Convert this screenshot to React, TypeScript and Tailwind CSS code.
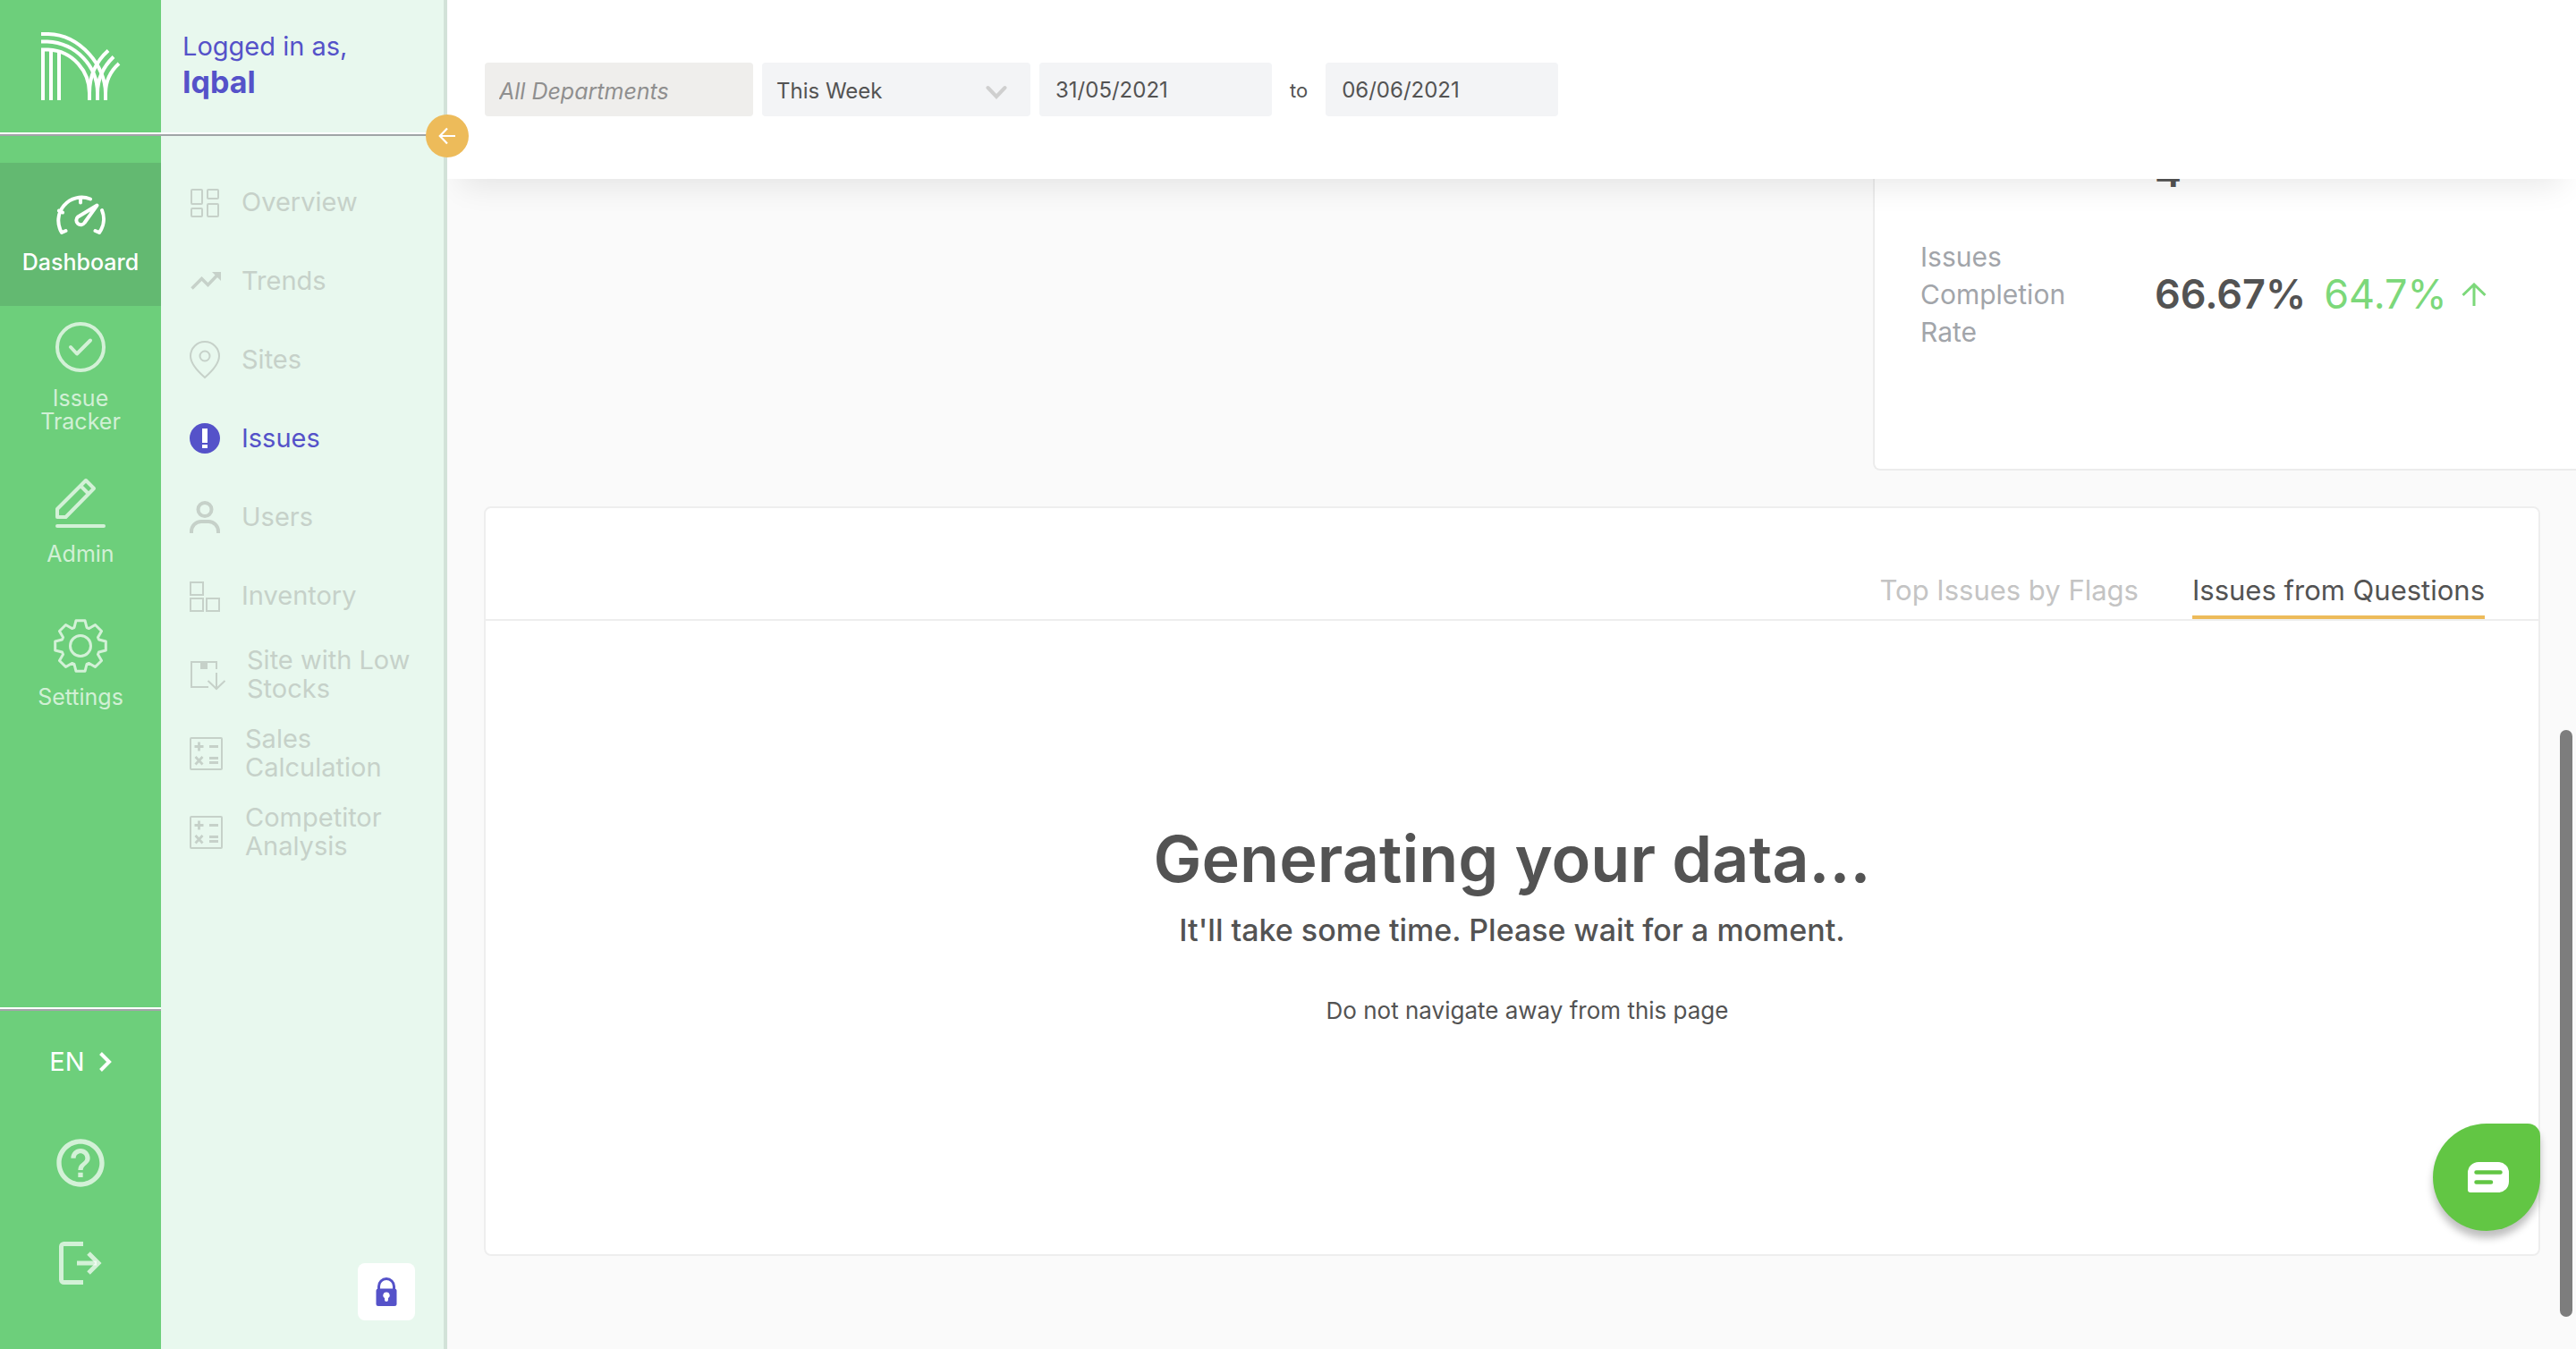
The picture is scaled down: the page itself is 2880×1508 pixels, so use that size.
import React from 'react';
import { MdHelpOutline } from 'react-icons/md';

const MUTED = 'text-[#c6d1c9]';

function Logo() {
  return (
    <svg viewBox="44 34 92 80" className="h-[80px] w-[92px]" fill="none" stroke="#fff" strokeWidth="4" aria-hidden="true">
      <path d="M48 112V55.500M57 112V57M66 112V58" />
      <path d="M46 55.500H54C82 57 100 80 100 104V112" />
      <path d="M46 46.500H53C85 48 109 74 109 104V112" />
      <path d="M46 38H54C90 39 118 74 118 104V112" />
      <path d="M100 112V104C100 86 107 69 121 56.500" />
      <path d="M109 112V104C109 89 115 75 127 63.500" />
      <path d="M118 112V104C118 91 123 80 133 71" />
    </svg>
  );
}

const railSvg = {
  viewBox: '0 0 60 60',
  className: 'size-[60px] overflow-visible',
  fill: 'none',
  stroke: 'currentColor',
  strokeWidth: 4,
  strokeLinecap: 'round' as const,
  strokeLinejoin: 'round' as const,
  'aria-hidden': true,
};

function gearPath() {
  const tooth = [[-7, -20.5], [-5, -28.3], [5, -28.3], [7, -20.5]];
  const pts: string[] = [];
  for (let k = 0; k < 8; k++) {
    const a = (k * Math.PI) / 4;
    for (const [x, y] of tooth) {
      pts.push(`${(30 + x * Math.cos(a) - y * Math.sin(a)).toFixed(2)} ${(30 + x * Math.sin(a) + y * Math.cos(a)).toFixed(2)}`);
    }
  }
  return `M${pts.join('L')}Z`;
}

const GaugeIcon = () => (
  <svg {...railSvg}>
    <path d="M13.500 52L9 54A26 26 0 0 1 41 16.500M54 29A26 26 0 0 1 51 54L46.500 52M30 15V20.500M6 29.500L10 31.500" />
    <path d="M48.500 23.500L27 36.500A5 5 0 1 0 34.500 43Z" />
  </svg>
);
const CheckIcon = () => (
  <svg {...railSvg}>
    <circle cx="30" cy="30" r="26" />
    <path d="M19 30L26 37.500L41 22.500" />
  </svg>
);
const PencilIcon = () => (
  <svg {...railSvg}>
    <path d="M36 5L45 14L13.500 46H4V37ZM30.500 11.500L38 19M4 56H56" />
  </svg>
);
const GearIcon = () => (
  <svg {...railSvg} strokeWidth={3}>
    <path d={gearPath()} />
    <circle cx="30" cy="30" r="11.500" />
  </svg>
);

const RAIL = [
  { label: 'Dashboard', Icon: GaugeIcon, cls: 'bg-[#63b971] pt-6 pb-9 font-medium text-white' },
  { label: 'Issue Tracker', Icon: CheckIcon, cls: 'pt-4 pb-6 text-white/70' },
  { label: 'Admin', Icon: PencilIcon, cls: 'pt-6 pb-8 text-white/70' },
  { label: 'Settings', Icon: GearIcon, cls: 'pt-7 pb-6 text-white/70' },
];

const menuSvg = {
  viewBox: '0 0 34 34',
  className: 'size-[34px] shrink-0 overflow-visible',
  fill: 'none',
  stroke: 'currentColor',
  strokeWidth: 2,
  'aria-hidden': true,
};

const OverviewIcon = () => (
  <svg {...menuSvg}>
    <rect x="2" y="3" width="12" height="16" rx="1" />
    <rect x="20" y="3" width="12" height="10" rx="1" />
    <rect x="2" y="24" width="12" height="9" rx="1" />
    <rect x="20" y="19" width="12" height="14" rx="1" />
  </svg>
);
const TrendsIcon = () => (
  <svg {...menuSvg}>
    <path d="M2.500 25.500L13.500 14.500L20.500 21.500L31 10.500" strokeWidth="3.500" />
    <path d="M25 7H35V17Z" fill="currentColor" stroke="none" />
  </svg>
);
const PinIcon = () => (
  <svg {...menuSvg}>
    <path d="M17 37C9 30 1 22 1 13A16 16 0 0 1 33 13C33 22 25 30 17 37Z" />
    <circle cx="17" cy="13" r="5.500" />
  </svg>
);
const AlertIcon = () => (
  <svg {...menuSvg} stroke="none">
    <circle cx="17" cy="17" r="17" fill="currentColor" />
    <path d="M14 6H20V22H14ZM14 24H20V28H14Z" fill="#fff" />
  </svg>
);
const UserIcon = () => (
  <svg {...menuSvg} strokeWidth={4}>
    <circle cx="17" cy="8.500" r="7.500" />
    <path d="M2 35V33.500A11 11 0 0 1 13 22H21A11 11 0 0 1 32 33.500V35" />
  </svg>
);
const BoxesIcon = () => (
  <svg {...menuSvg}>
    <path d="M1 2H15V16H1ZM1 20H15V34H1ZM19 20H33V34H19Z" />
  </svg>
);
const LowStockIcon = () => (
  <svg {...menuSvg} viewBox="0 0 40 34" className="h-[34px] w-[40px] shrink-0 overflow-visible">
    <path d="M30 11V3H2V31H21M30 15V32M20.500 24L30 33L39.500 24" />
    <path d="M12 3H20V11H12Z" fill="currentColor" stroke="none" />
  </svg>
);
const CalcIcon = () => (
  <svg {...menuSvg} viewBox="0 0 38 38" className="size-[38px] shrink-0 overflow-visible">
    <rect x="1" y="2" width="35" height="35" rx="1" />
    <path d="M5.500 11.500H15.500M10.500 6.500V16.500M22 11.500H32M22 24.500H32M22 29.500H32M6.500 23L14.500 31.500M14.500 23L6.500 31.500" strokeWidth="2.800" />
  </svg>
);

const MENU = [
  { label: 'Overview', Icon: OverviewIcon },
  { label: 'Trends', Icon: TrendsIcon },
  { label: 'Sites', Icon: PinIcon },
  { label: 'Issues', Icon: AlertIcon, active: true },
  { label: 'Users', Icon: UserIcon },
  { label: 'Inventory', Icon: BoxesIcon },
  { label: 'Site with Low Stocks', Icon: LowStockIcon },
  { label: 'Sales Calculation', Icon: CalcIcon },
  { label: 'Competitor Analysis', Icon: CalcIcon },
];

function Rail() {
  return (
    <nav aria-label="Main" className="flex w-[180px] shrink-0 flex-col bg-[#6dcf7b]">
      <a href="#home" aria-label="Home" className="flex h-[148px] shrink-0 justify-center pt-[34px]">
        <Logo />
      </a>
      <div className="h-1 shrink-0 border-t-2 border-b-2 border-t-white border-b-[#a3a3a9]" />
      <div className="flex flex-col pt-[30px]">
        {RAIL.map(({ label, Icon, cls }) => (
          <a key={label} href="#section" className={`flex flex-col items-center gap-[14px] px-4 text-center text-[25px] leading-[26px] ${cls}`}>
            <Icon />
            {label}
          </a>
        ))}
      </div>
      <div className="mt-auto flex flex-col pb-10">
        <div className="h-1 border-t-2 border-b-2 border-t-white border-b-[#a3a3a9]" />
        <button className="flex h-[114px] items-center justify-center gap-4 text-[29px] text-white">
          EN
          <svg viewBox="0 0 14 22" className="h-[22px] w-[14px]" fill="none" stroke="currentColor" strokeWidth="4" aria-hidden="true">
            <path d="M1.500 1.500L11 11L1.500 20.500" />
          </svg>
        </button>
        <button aria-label="Help" className="flex h-[112px] items-center justify-center text-white/70">
          <MdHelpOutline className="size-[64px]" />
        </button>
        <button aria-label="Log out" className="flex h-[112px] items-center justify-center text-white/70">
          <svg viewBox="0 0 48 48" className="size-[48px]" fill="none" stroke="currentColor" strokeWidth="5" aria-hidden="true">
            <path d="M27 2.500H5.500A3 3 0 0 0 2.500 5.500V42.500A3 3 0 0 0 5.500 45.500H27M20 24H42" />
            <path d="M33 13L44 24L33 35" />
          </svg>
        </button>
      </div>
    </nav>
  );
}

function SidePanel() {
  return (
    <aside className="relative z-20 flex w-80 shrink-0 flex-col border-r-4 border-[#d2e2d8] bg-[#e8f8ee]">
      <div className="h-[148px] shrink-0 pt-8 pl-6 text-[#5552c9]">
        <p className="text-[29px] leading-10">Logged in as,</p>
        <p className="text-[34px] leading-10 font-bold">Iqbal</p>
      </div>
      <div className="h-1 shrink-0 border-t-2 border-b-2 border-t-white border-b-[#a0a5a6]" />
      <button
        aria-label="Collapse menu"
        className="absolute top-[128px] -right-[28px] flex size-12 items-center justify-center rounded-full bg-[#edbb5a]"
      >
        <svg viewBox="0 0 20 20" className="size-5" fill="none" stroke="#fff" strokeWidth="2.200" aria-hidden="true">
          <path d="M19 10H2M10 1.500L1.800 10L10 18.500" />
        </svg>
      </button>
      <nav aria-label="Dashboard" className="pt-[30px]">
        {MENU.map(({ label, Icon, active }) => (
          <a
            key={label}
            href="#view"
            aria-current={active ? 'page' : undefined}
            className={`flex h-[88px] items-center gap-6 pr-4 pl-8 text-[29px] leading-8 ${active ? 'text-[#5552c9]' : MUTED}`}
          >
            <Icon />
            <span>{label}</span>
          </a>
        ))}
      </nav>
      <button aria-label="Lock menu" className="mt-auto mr-8 mb-8 flex size-16 items-center justify-center self-end rounded-lg bg-white">
        <svg viewBox="0 0 24 32" className="h-8 w-6" aria-hidden="true">
          <path d="M3.500 14V10A8.500 8.500 0 0 1 20.500 10V14" fill="none" stroke="#5552c9" strokeWidth="3" />
          <rect x="0.500" y="12.500" width="23" height="19.500" rx="2.500" fill="#5552c9" />
          <path d="M12 16.500A3.500 3.500 0 0 1 14 23V25A2 2 0 0 1 10 25V23A3.500 3.500 0 0 1 12 16.500Z" fill="#fff" />
        </svg>
      </button>
    </aside>
  );
}

function Filters() {
  const field = 'h-[60px] rounded bg-[#f3f4f6] text-[24px] text-[#535353] outline-none';
  return (
    <header className="relative z-10 flex h-[200px] shrink-0 items-start bg-white pt-[70px] pl-[42px] shadow-[0_24px_32px_-16px_rgba(0,0,0,0.09)]">
      <input
        aria-label="Department"
        disabled
        placeholder="All Departments"
        className="h-[60px] w-[300px] rounded bg-[#efeeec] px-4 pt-1 text-[25px] italic outline-none placeholder:text-[#8f8f8f]"
      />
      <div className="relative ml-[10px]">
        <select aria-label="Period" className={`${field} w-[300px] appearance-none px-4 pt-1`}>
          <option>This Week</option>
        </select>
        <svg viewBox="0 0 24 16" className="pointer-events-none absolute top-[25px] right-[26px] h-4 w-6" fill="none" stroke="#cfcfcf" strokeWidth="4" strokeLinecap="round" aria-hidden="true">
          <path d="M2.500 3L12 13L21.500 3" />
        </svg>
      </div>
      <input aria-label="From date" defaultValue="31/05/2021" className={`${field} ml-[10px] w-[260px] px-[18px]`} />
      <span className="px-5 text-[22px] leading-[62px] text-[#535353]">to</span>
      <input aria-label="To date" defaultValue="06/06/2021" className={`${field} w-[260px] px-[18px]`} />
    </header>
  );
}

function IssueStats() {
  return (
    <section aria-label="Issue totals" className="flex w-[786px] max-w-full shrink-0 flex-col gap-10 self-end rounded-bl-lg border-b-2 border-l-2 border-[#ececec] bg-white pb-[132px] pl-[51px]">
      <div className="flex h-[66px] items-center pl-[262px] text-[45px] font-semibold">4</div>
      <div className="flex items-center text-[45px]">
        <p className="w-[262px] pr-16 text-[30px] leading-[42px] text-[#a2a5aa]">Issues Completion Rate</p>
        <span className="font-semibold">66.67%</span>
        <span className="ml-5 text-[#7cd87a]">64.7%</span>
        <svg viewBox="0 0 28 26" className="ml-4 h-[26px] w-7" fill="none" stroke="#7cd87a" strokeWidth="3" aria-hidden="true">
          <path d="M14 26V2M1.500 14L14 2L26.500 14" />
        </svg>
      </div>
    </section>
  );
}

function IssuesCard() {
  return (
    <section className="mr-10 ml-[41px] shrink-0 rounded-lg border-2 border-[#eee] bg-white">
      <div role="tablist" className="flex items-end justify-end gap-[60px] border-b-2 border-[#eee] pt-16 pr-[60px] text-[31px] leading-[46px]">
        <button role="tab" aria-selected="false" className="h-[60px] border-b-4 border-transparent text-[#c4c4c4]">
          Top Issues by Flags
        </button>
        <button role="tab" aria-selected="true" className="h-[60px] border-b-4 border-[#edbb5a]">
          Issues from Questions
        </button>
      </div>
      <div className="flex flex-col items-center pt-[212px] pb-[252px] text-center">
        <h1 className="text-[72px] leading-[108px] font-semibold">Generating your data...</h1>
        <p className="text-[34px] leading-[52px] font-medium">It&apos;ll take some time. Please wait for a moment.</p>
        <p className="mt-11 pl-[34px] text-[26px] leading-[40px]">Do not navigate away from this page</p>
      </div>
    </section>
  );
}

export default function App() {
  return (
    <div className="relative flex h-screen w-full overflow-hidden bg-[#fafafa] font-['Inter',sans-serif] text-[#535353]">
      <Rail />
      <SidePanel />
      <main className="flex min-w-0 flex-1 flex-col">
        <Filters />
        <div className="flex min-h-0 flex-1 flex-col justify-end gap-10 overflow-hidden pb-[104px]">
          <IssueStats />
          <IssuesCard />
        </div>
      </main>
      <button
        aria-label="Open chat"
        className="absolute right-10 bottom-[132px] flex size-[120px] items-center justify-center rounded-[60px] rounded-tr-[14px] bg-[#62c644] shadow-[0_8px_8px_rgba(0,0,0,0.25)]"
      >
        <svg viewBox="0 0 46 34" className="ml-1 h-[34px] w-[46px]" aria-hidden="true">
          <path d="M12 0H34A12 12 0 0 1 46 12V22A12 12 0 0 1 34 34H3A3 3 0 0 1 0 31V12A12 12 0 0 1 12 0Z" fill="#fff" />
          <path d="M9.500 11.500H36.500M9.500 22.500H26" stroke="#62c644" strokeWidth="4.500" strokeLinecap="round" />
        </svg>
      </button>
      <div className="absolute right-1 bottom-9 h-[656px] w-[14px] rounded-full bg-[#7d7d7d]" />
    </div>
  );
}
